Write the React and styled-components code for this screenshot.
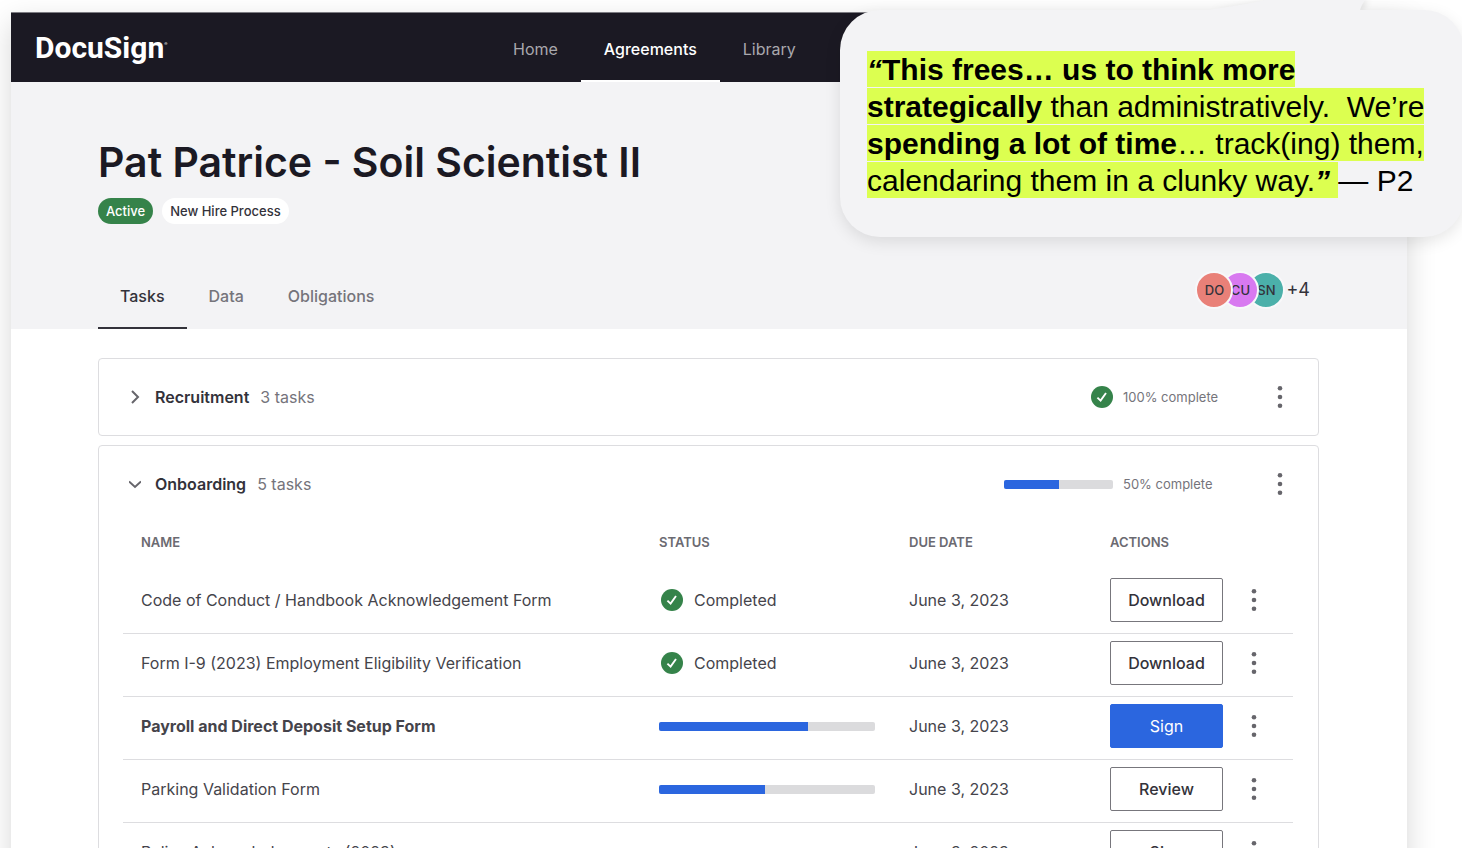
import React from "react";
import styled, { createGlobalStyle } from "styled-components";

const GlobalStyle = createGlobalStyle`
  *, *::before, *::after { box-sizing: border-box; }
  body {
    margin: 0;
    background: #fff;
    color: #33323a;
    font-family: Inter, "Liberation Sans", sans-serif;
    font-size: 16px;
    line-height: 24px;
  }
  button { font: inherit; color: inherit; cursor: pointer; }
  h1, h2, p { margin: 0; }
`;

const Page = styled.div`
  position: relative;
  height: 100vh;
  overflow: hidden;
  padding: 12px 55px 0 11px;
`;

const Sheet = styled.div`
  min-height: 100%;
  background: #fff;
  box-shadow: 0 10px 28px rgba(0, 0, 0, 0.16);
`;

const TopBar = styled.header`
  display: grid;
  grid-template-columns: 455px 1fr;
  height: 70px;
  padding-left: 24px;
  background: #1b1923;
  border-top: 1px solid #7d7c82;
`;

const Logo = styled.a`
  align-self: center;
  padding-bottom: 4px;
  color: #fff;
  font-family: Roboto, sans-serif;
  font-size: 30px;
  font-weight: 700;
  text-decoration: none;
`;

const Registered = styled.span`
  font-size: 4px;
  vertical-align: 13px;
`;

const Nav = styled.nav`
  display: flex;
`;

const NavLink = styled.a`
  display: flex;
  align-items: center;
  padding: 4px 23px 0;
  border-bottom: 2px solid ${(p) => (p.$active ? "#fff" : "transparent")};
  color: ${(p) => (p.$active ? "#fff" : "#a9a8ad")};
  font-weight: ${(p) => (p.$active ? 500 : 400)};
  text-decoration: none;
`;

const Hero = styled.section`
  padding: 56px 88px 0 87px;
  background: #f3f3f5;
`;

const Title = styled.h1`
  color: #1b1923;
  font-size: 41px;
  font-weight: 600;
  line-height: 48px;
`;

const Pills = styled.div`
  display: flex;
  gap: 9px;
  margin-top: 12px;
`;

const Pill = styled.span`
  padding: 0 8px;
  border-radius: 13px;
  background: ${(p) => (p.$green ? "#35834a" : "#fff")};
  color: ${(p) => (p.$green ? "#fff" : "#33323a")};
  font-size: 13px;
  font-weight: 500;
  line-height: 26px;
`;

const TabRow = styled.div`
  display: flex;
  justify-content: space-between;
  height: 66px;
  margin-top: 39px;
`;

const Tabs = styled.div`
  display: flex;
`;

const Tab = styled.button`
  padding: 2px 22px 0;
  border: 0;
  border-bottom: 2px solid ${(p) => (p.$active ? "#33323a" : "transparent")};
  background: none;
  color: ${(p) => (p.$active ? "#33323a" : "#75747b")};
  font-weight: 500;
`;

const People = styled.div`
  display: flex;
  align-items: center;
  padding: 0 9px 12px 0;
  font-size: 18px;
`;

const Avatar = styled.span`
  position: relative;
  z-index: ${(p) => p.$layer};
  width: 38px;
  height: 38px;
  margin-right: -12px;
  border: 2px solid #f8f8fa;
  border-radius: 50%;
  background: ${(p) => p.$color};
  font-size: 13px;
  font-weight: 500;
  line-height: 34px;
  text-align: center;
`;

const More = styled.span`
  margin-left: 13px;
`;

const Content = styled.main`
  display: grid;
  gap: 9px;
  padding: 29px 88px 40px 87px;
`;

const Card = styled.section`
  border: 1px solid #dddde0;
  border-radius: 4px;
  background: #fff;
`;

const CardHead = styled.div`
  display: flex;
  align-items: center;
  height: 76px;
  padding: 0 24px 0 30px;
`;

const Toggle = styled.button`
  display: flex;
  align-items: center;
  gap: 14px;
  padding: 0;
  border: 0;
  background: none;
`;

const CardTitle = styled.h2`
  font-size: 16px;
  font-weight: 600;
`;

const Count = styled.span`
  margin-left: 11px;
  color: #75747b;
`;

const Summary = styled.div`
  display: flex;
  align-items: center;
  gap: 10px;
  margin-left: auto;
`;

const SummaryText = styled.span`
  width: 133px;
  color: #75747b;
  font-size: 13px;
`;

const Track = styled.div`
  width: ${(p) => p.$width}px;
  height: 9px;
  overflow: hidden;
  border-radius: 2px;
  background: #dbdbdd;
`;

const Fill = styled.div`
  height: 100%;
  background: #2b66df;
`;

const KebabButton = styled.button`
  display: inline-flex;
  justify-content: center;
  width: 28px;
  padding: 0;
  border: 0;
  background: none;
`;

const TableWrap = styled.div`
  padding: 0 25px 24px 24px;
`;

const Table = styled.table`
  width: 100%;
  table-layout: fixed;
  border-collapse: separate;
  border-spacing: 0;
`;

const Th = styled.th`
  width: ${(p) => p.$width || "auto"};
  height: 49px;
  padding: 0 0 10px ${(p) => p.$indent || "0"};
  color: #6b6a71;
  font-size: 13px;
  font-weight: 600;
  text-align: left;
`;

const Td = styled.td`
  height: 63px;
  padding: 0 0 4px ${(p) => p.$indent || "0"};
  border-bottom: 1px solid #dddde0;
  color: #45444b;
  font-weight: ${(p) => (p.$bold ? 700 : 400)};
`;

const Done = styled.span`
  display: flex;
  align-items: center;
  gap: 11px;
  padding-left: 2px;
`;

const Actions = styled.div`
  display: flex;
  align-items: center;
  gap: 17px;
`;

const ActionButton = styled.button`
  width: 113px;
  height: 44px;
  padding: 0;
  border: 1px solid ${(p) => (p.$primary ? "#2b66df" : "#77767c")};
  border-radius: 2px;
  background: ${(p) => (p.$primary ? "#2b66df" : "#fff")};
  color: ${(p) => (p.$primary ? "#fff" : "#33323a")};
  font-weight: ${(p) => (p.$primary ? 400 : 500)};
`;

const QuoteCard = styled.aside`
  position: absolute;
  z-index: 5;
  top: 10px;
  left: 840px;
  right: -2px;
  padding: 41px 0 38px 27px;
  border-radius: 40px;
  background: #f3f3f5;
  box-shadow: 0 5px 16px rgba(0, 0, 0, 0.1);
`;

const Tail = styled.svg`
  position: absolute;
  top: -10px;
  right: 95px;
  filter: drop-shadow(3px 0 3px rgba(0, 0, 0, 0.1));
  clip-path: inset(0 -12px 0 -12px);
`;

const Quote = styled.p`
  color: #000;
  font-family: "Liberation Sans", Arial, sans-serif;
  font-size: 30px;
  line-height: 37px;
  white-space: nowrap;
`;

const Highlight = styled.mark`
  padding: 2px 0 1px;
  background: #dcff50;
  color: inherit;
`;

const CheckIcon = () => (
  <svg width="22" height="22" viewBox="0 0 22 22" aria-hidden="true">
    <circle cx="11" cy="11" r="11" fill="#35834a" />
    <path d="M6.4 11.6 9.6 14.6 15 7" fill="none" stroke="#fff" strokeWidth="1.9" />
  </svg>
);

const Chevron = ({ open }) => (
  <svg width="12" height="14" viewBox="0 0 12 14" fill="none" stroke="#66656b" strokeWidth="2" aria-hidden="true">
    <path d={open ? "M0 4.5 6 10 12 4.5" : "M3 1 9 7 3 13"} />
  </svg>
);

const Kebab = ({ label }) => (
  <KebabButton aria-label={label}>
    <svg width="6" height="24" viewBox="0 0 6 24" fill="#66656b" aria-hidden="true">
      <circle cx="3" cy="3.2" r="2.3" />
      <circle cx="3" cy="12" r="2.3" />
      <circle cx="3" cy="20.8" r="2.3" />
    </svg>
  </KebabButton>
);

const Progress = ({ value, width, label }) => (
  <Track $width={width} role="progressbar" aria-label={label} aria-valuenow={value} aria-valuemin={0} aria-valuemax={100}>
    <Fill style={{ width: `${value}%` }} />
  </Track>
);

const people = [
  { initials: "DO", color: "#e98078" },
  { initials: "CU", color: "#d879f0" },
  { initials: "SN", color: "#4bb0aa" },
];

const tasks = [
  { name: "Code of Conduct / Handbook Acknowledgement Form", action: "Download" },
  { name: "Form I-9 (2023) Employment Eligibility Verification", action: "Download" },
  { name: "Payroll and Direct Deposit Setup Form", progress: 69, action: "Sign", primary: true },
  { name: "Parking Validation Form", progress: 49, action: "Review" },
  { name: "Policy Acknowledgements (2023)", progress: 0, action: "Sign" },
];

export default function App() {
  return (
    <>
      <GlobalStyle />
      <Page>
        <Sheet>
          <TopBar>
            <Logo href="#home">
              DocuSign<Registered>®</Registered>
            </Logo>
            <Nav>
              <NavLink href="#home">Home</NavLink>
              <NavLink href="#agreements" $active>Agreements</NavLink>
              <NavLink href="#library">Library</NavLink>
            </Nav>
          </TopBar>
          <Hero>
            <Title>Pat Patrice - Soil Scientist II</Title>
            <Pills>
              <Pill $green>Active</Pill>
              <Pill>New Hire Process</Pill>
            </Pills>
            <TabRow>
              <Tabs>
                <Tab $active>Tasks</Tab>
                <Tab>Data</Tab>
                <Tab>Obligations</Tab>
              </Tabs>
              <People>
                {people.map((p, i) => (
                  <Avatar key={p.initials} $color={p.color} $layer={people.length - i}>
                    {p.initials}
                  </Avatar>
                ))}
                <More>+4</More>
              </People>
            </TabRow>
          </Hero>
          <Content>
            <Card>
              <CardHead>
                <Toggle aria-expanded="false">
                  <Chevron />
                  <CardTitle>Recruitment</CardTitle>
                </Toggle>
                <Count>3 tasks</Count>
                <Summary>
                  <CheckIcon />
                  <SummaryText>100% complete</SummaryText>
                  <Kebab label="Recruitment options" />
                </Summary>
              </CardHead>
            </Card>
            <Card>
              <CardHead>
                <Toggle aria-expanded="true">
                  <Chevron open />
                  <CardTitle>Onboarding</CardTitle>
                </Toggle>
                <Count>5 tasks</Count>
                <Summary>
                  <Progress value={50} width={109} label="Onboarding" />
                  <SummaryText>50% complete</SummaryText>
                  <Kebab label="Onboarding options" />
                </Summary>
              </CardHead>
              <TableWrap>
                <Table>
                  <thead>
                    <tr>
                      <Th scope="col" $indent="18px">NAME</Th>
                      <Th scope="col" $width="250px">STATUS</Th>
                      <Th scope="col" $width="201px">DUE DATE</Th>
                      <Th scope="col" $width="183px">ACTIONS</Th>
                    </tr>
                  </thead>
                  <tbody>
                    {tasks.map((t) => (
                      <tr key={t.name}>
                        <Td $indent="18px" $bold={t.primary}>{t.name}</Td>
                        <Td>
                          {t.progress === undefined ? (
                            <Done>
                              <CheckIcon />
                              Completed
                            </Done>
                          ) : (
                            <Progress value={t.progress} width={216} label={t.name} />
                          )}
                        </Td>
                        <Td>June 3, 2023</Td>
                        <Td>
                          <Actions>
                            <ActionButton $primary={t.primary}>{t.action}</ActionButton>
                            <Kebab label={`Options for ${t.name}`} />
                          </Actions>
                        </Td>
                      </tr>
                    ))}
                  </tbody>
                </Table>
              </TableWrap>
            </Card>
          </Content>
        </Sheet>
        <QuoteCard>
          <Tail width="160" height="10" viewBox="0 0 160 10" aria-hidden="true">
            <path d="M0 10C20 7 44 3 56 0H156C154 3 152 6 151 10Z" fill="#f3f3f5" />
          </Tail>
          <Quote>
            <Highlight>
              <b><i>“</i>This frees… us to think more</b>
              <br />
              <b>strategically</b> than administratively.&nbsp; We’re
              <br />
              <b>spending a lot of time</b>… track(ing) them,
              <br />
              calendaring them in a clunky way.<b><i>” </i></b>
            </Highlight>
            — P2
          </Quote>
        </QuoteCard>
      </Page>
    </>
  );
}
